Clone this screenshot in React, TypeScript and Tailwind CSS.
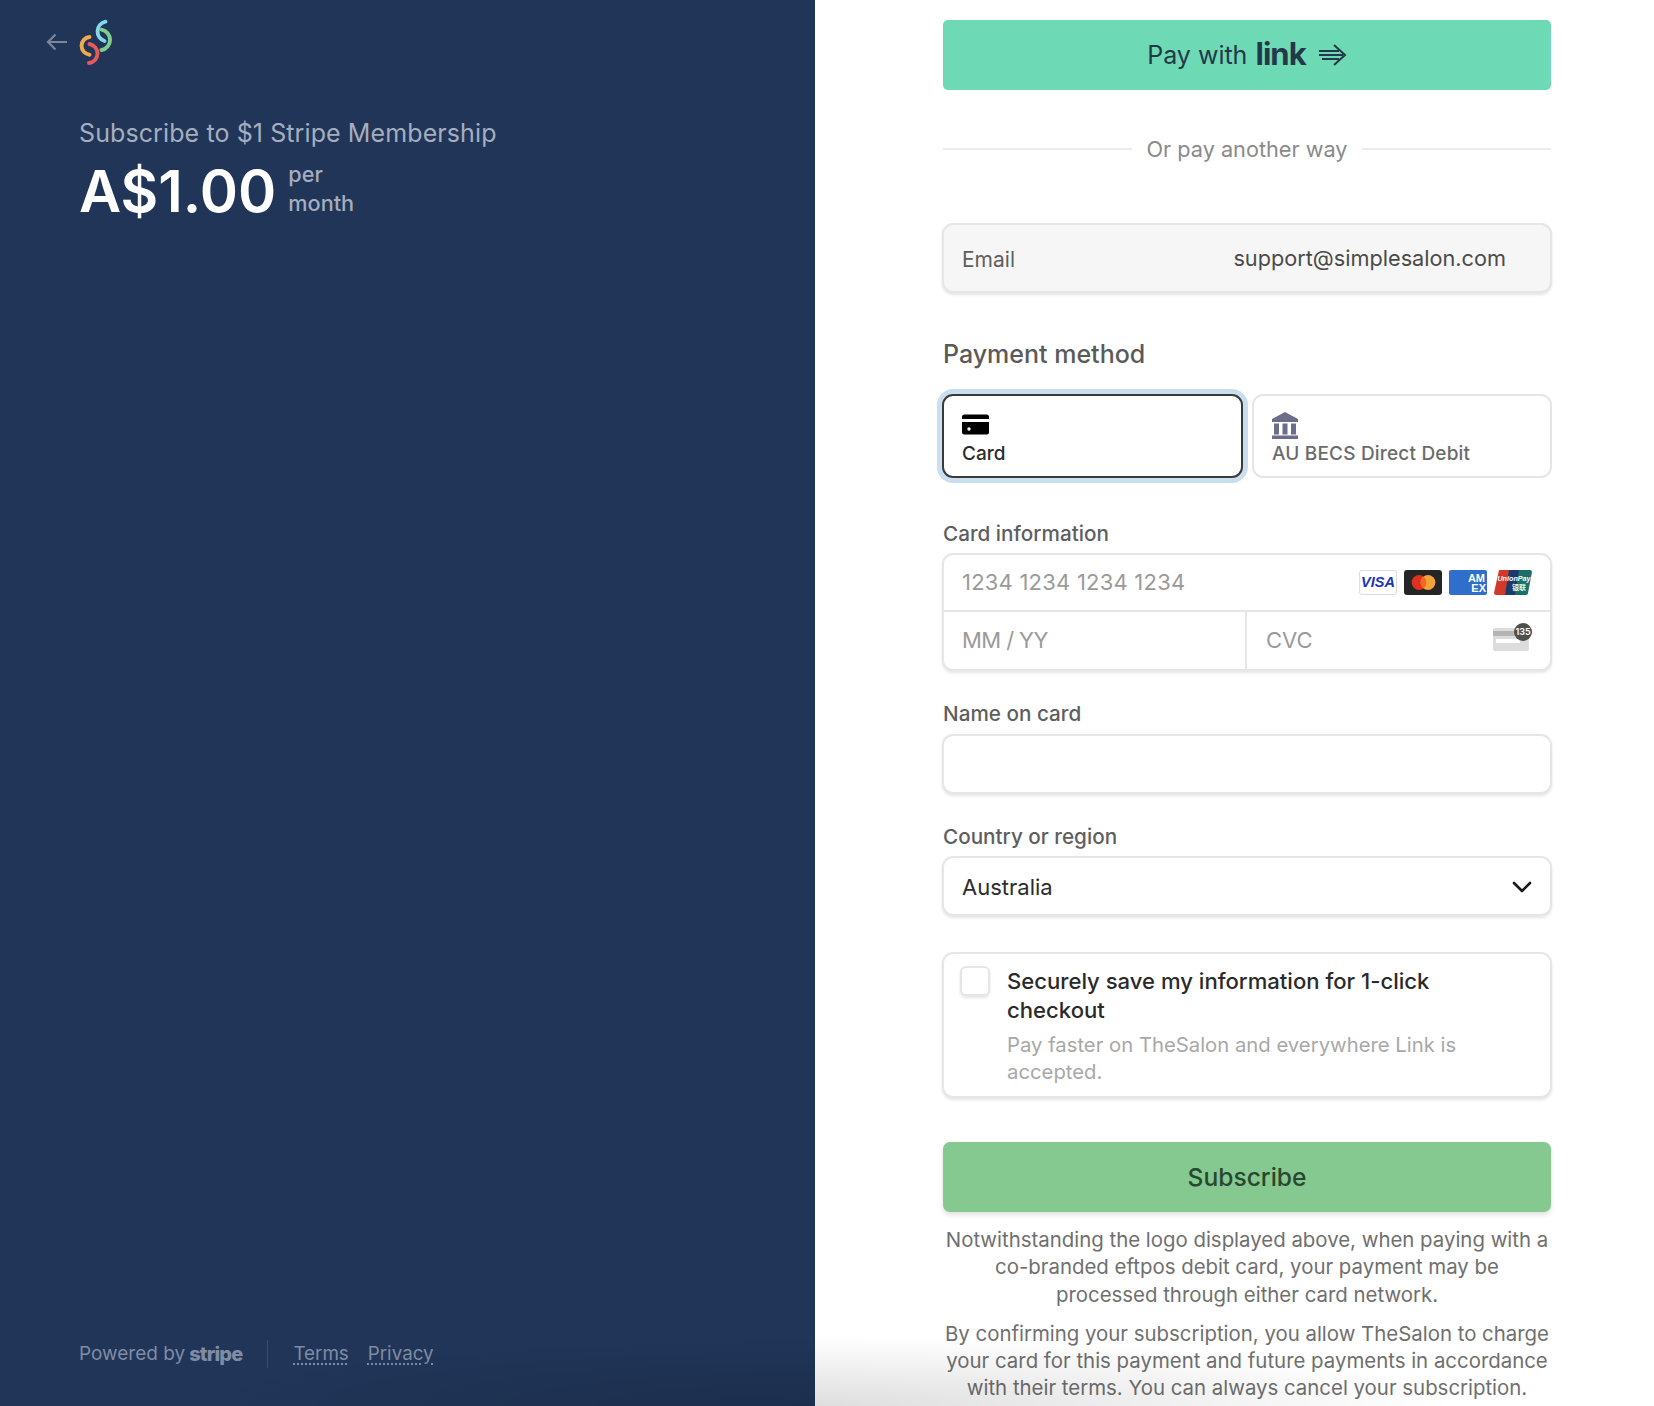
import React from "react";

const Label = ({ children, className = "" }: { children: React.ReactNode; className?: string }) => (
  <div className={`text-[20.7px] leading-[28px] text-[#5e5e5e] ${className}`}>{children}</div>
);

const Logo = () => (
  <svg width="36" height="46" viewBox="0 0 36 46" fill="none" strokeWidth="3.9" strokeLinecap="round">
    <path d="M26.5 2.7 A 10 10 0 0 0 25.5 22" stroke="#84d8e8" />
    <path d="M22.5 10.7 A 10.3 10.3 0 0 1 22.5 31" stroke="#80cd8e" />
    <path d="M10.5 18 A 8.9 8.9 0 0 0 10.5 35.7" stroke="#f2a94e" />
    <path d="M10.5 25 A 9.6 9.6 0 0 1 10 44" stroke="#e8595b" />
  </svg>
);

const LinkArrow = () => (
  <svg width="29" height="22" viewBox="0 0 29 22" fill="none" stroke="#24384a" strokeWidth="2">
    <path d="M1 7 H21 M1 11 H25 M4 15 H21" />
    <path d="M16 1 L27 11 L16 21" />
  </svg>
);

const CardIcon = () => (
  <svg width="27" height="21" viewBox="0 0 27 21">
    <path d="M0 3 a2.5 2.5 0 0 1 2.5 -2.5 h22 a2.5 2.5 0 0 1 2.5 2.5 v2 h-27z" fill="#000" />
    <path d="M0 8 h27 v10 a2.5 2.5 0 0 1 -2.5 2.5 h-22 a2.5 2.5 0 0 1 -2.5 -2.5z" fill="#000" />
    <circle cx="7" cy="15" r="1.7" fill="#fff" />
  </svg>
);

const BankIcon = () => (
  <svg width="26" height="27" viewBox="0 0 26 27" fill="#6c6d8a">
    <path d="M13 0 L26 7 V10 H0 V7z" />
    <rect x="2" y="11.5" width="5" height="11" />
    <rect x="10.5" y="11.5" width="5" height="11" />
    <rect x="19" y="11.5" width="5" height="11" />
    <rect x="0" y="23.5" width="26" height="3.5" />
  </svg>
);

const Visa = () => (
  <div className="w-[38px] h-[25px] rounded-[3px] border border-[#dcdcdc] bg-white flex items-center justify-center text-[14.5px] leading-none font-bold italic text-[#1a35b8] [font-family:'Liberation_Sans',sans-serif]">
    VISA
  </div>
);

const Mastercard = () => (
  <svg width="38" height="25" viewBox="0 0 38 25">
    <rect width="38" height="25" rx="3" fill="#252525" />
    <circle cx="15" cy="12.5" r="7.4" fill="#e0301e" />
    <circle cx="24" cy="12.5" r="7.4" fill="#f2a33a" />
    <path d="M19.5 6.6 a7.4 7.4 0 0 1 0 11.8 a7.4 7.4 0 0 1 0 -11.8z" fill="#f26a22" />
  </svg>
);

const Amex = () => (
  <svg width="38" height="25" viewBox="0 0 38 25">
    <rect width="38" height="25" rx="2" fill="#2f6fcb" />
    <text x="36" y="11.5" textAnchor="end" fontSize="11" fontWeight="700" fill="#fff" fontFamily="Liberation Sans, sans-serif">AM</text>
    <text x="37" y="21.5" textAnchor="end" fontSize="11" fontWeight="700" fill="#fff" fontFamily="Liberation Sans, sans-serif">EX</text>
  </svg>
);

const UnionPay = () => (
  <svg width="38" height="25" viewBox="0 0 38 25">
    <path d="M5 0 H17 L13 25 H2 A2 2 0 0 1 0 23z" fill="#d2392b" />
    <path d="M15 0 H27 L23 25 H11z" fill="#1c3a6e" />
    <path d="M25 0 H36 A2 2 0 0 1 38 2 L34 23 A2 2 0 0 1 32 25 H21z" fill="#1f6f68" />
    <text x="20" y="11" textAnchor="middle" fontSize="7.2" fontWeight="700" fontStyle="italic" fill="#fff" fontFamily="Liberation Sans, sans-serif">UnionPay</text>
    <text x="25" y="20" textAnchor="middle" fontSize="7" fontWeight="700" fill="#dfe" fontFamily="Noto Sans CJK SC, sans-serif">银联</text>
  </svg>
);

const CvcIcon = () => (
  <div className="relative w-[36px] h-[23px] -mt-[3px]">
    <svg width="36" height="23" viewBox="0 0 36 23" className="absolute left-0 top-0">
      <rect width="36" height="23" rx="2" fill="#dcdcdc" />
      <rect y="3" width="36" height="5" fill="#b4b4b4" />
      <rect x="3" y="11" width="24" height="4" fill="#fff" />
    </svg>
    <div className="absolute -right-[3px] -top-[5px] w-[18px] h-[18px] rounded-full bg-[#4f4f4f] text-white text-[9px] leading-[18px] text-center font-semibold">135</div>
  </div>
);

const fieldShadow = "shadow-[0_2px_3px_rgba(0,0,0,0.10)]";

export default function App() {
  return (
    <div className="relative flex h-[1406px] w-full overflow-hidden bg-white [font-family:Inter,'Noto_Sans',sans-serif]">
      <div className="w-[815px] shrink-0 bg-[#203558] flex flex-col justify-between pb-[38px]">
        <div>
          <div className="flex items-center pl-[46px] pt-[19px] h-[65px]">
            <svg width="22" height="18" viewBox="0 0 22 18" fill="none" stroke="#7a8699" strokeWidth="2.2" className="mr-[11px]">
              <path d="M21 9 H2 M9.5 1.5 L2 9 L9.5 16.5" />
            </svg>
            <Logo />
          </div>
          <div className="pl-[79px] pt-[51px]">
            <div className="text-[25px] leading-[34px] text-[#a5aebe] font-normal tracking-[0.1px]">Subscribe to $1 Stripe Membership</div>
            <div className="flex items-center mt-[7px]">
              <div className="text-[58px] leading-[68px] font-semibold text-white">A$1.00</div>
              <div className="ml-[12px] -mt-[5px] text-[21.7px] leading-[28.5px] text-[#a5aebe] font-medium">per<br />month</div>
            </div>
          </div>
        </div>
        <div className="pl-[79px] flex items-center text-[19px] text-[#7f8ca3]">
          <span>Powered by</span>
          <span className="ml-[4px] font-extrabold text-[20px] tracking-[-0.04em] leading-none">stripe</span>
          <div className="w-px h-[28px] bg-[#3a4d6d] mx-[25px]" />
          <span className="text-[18.8px] underline decoration-dotted decoration-2 underline-offset-[4px]">Terms</span>
          <span className="text-[18.8px] ml-[19px] underline decoration-dotted decoration-2 underline-offset-[4px]">Privacy</span>
        </div>
      </div>

      <div className="flex-1 pl-[128px] pt-[20px]">
        <div className="w-[608px]">
          <div className="h-[70px] rounded-[5px] bg-[#6ddab5] flex items-center justify-center text-[#24384a]">
            <span className="text-[25px] mt-[1px]">Pay with</span>
            <span className="ml-[8px] text-[31px] font-bold leading-none tracking-[-0.03em] -mt-[4px]">link</span>
            <span className="ml-[12px]"><LinkArrow /></span>
          </div>

          <div className="flex items-center mt-[43px] h-[32px]">
            <div className="flex-1 h-[2px] bg-[#ececec]" />
            <div className="px-[14px] text-[21.7px] text-[#8a8a8a]">Or pay another way</div>
            <div className="flex-1 h-[2px] bg-[#ececec]" />
          </div>

          <div className={`mt-[58px] h-[70px] -mx-px rounded-[11px] border-2 border-[#e6e6e6] bg-[#f6f6f6] flex items-center justify-between pl-[18px] pr-[19px] ${fieldShadow}`}>
            <span className="text-[21px] text-[#5e5e5e] mt-[3px]">Email</span>
            <span className="text-[21.7px] text-[#4a4a4a] mr-[25px]">support@simplesalon.com</span>
          </div>

          <div className="mt-[44px] text-[25px] leading-[34px] text-[#5a5a5a] font-medium">Payment method</div>

          <div className="flex gap-[9px] mt-[23px] -mx-px">
            <div className="w-[301px] h-[84px] rounded-[11px] border-2 border-[#3a3a3a] bg-white shadow-[0_0_0_5px_#c9deef] pl-[18px] pt-[18px]">
              <CardIcon />
              <div className="text-[19px] leading-[26px] text-[#2c2c2c] mt-[6px] font-[450]">Card</div>
            </div>
            <div className="flex-1 h-[84px] rounded-[11px] border-2 border-[#e6e6e6] bg-white pl-[18px] pt-[16px]">
              <BankIcon />
              <div className="text-[19px] leading-[26px] text-[#6b6b6b] mt-[2px] font-[450] tracking-[0.01em]">AU BECS Direct Debit</div>
            </div>
          </div>

          <Label className="mt-[42px] font-[450]">Card information</Label>
          <div className={`mt-[5px] -mx-px h-[118px] rounded-[11px] border-2 border-[#e6e6e6] bg-white ${fieldShadow}`}>
            <div className="h-[57px] flex items-center justify-between pl-[18px] pr-[18px] border-b-2 border-[#e6e6e6]">
              <span className="text-[22px] text-[#9a9a9a] tracking-[0.01em]">1234 1234 1234 1234</span>
              <div className="flex gap-[7px]">
                <Visa />
                <Mastercard />
                <Amex />
                <UnionPay />
              </div>
            </div>
            <div className="flex h-[57px]">
              <div className="w-[303px] flex items-center pl-[18px] border-r-2 border-[#e6e6e6] text-[22px] tracking-[-0.6px] text-[#9a9a9a]">MM / YY</div>
              <div className="flex-1 flex items-center justify-between pl-[19px] pr-[21px] text-[22px] text-[#9a9a9a]">
                <span>CVC</span>
                <CvcIcon />
              </div>
            </div>
          </div>

          <Label className="mt-[29px] font-[450]">Name on card</Label>
          <div className={`mt-[6px] -mx-px h-[60px] rounded-[11px] border-2 border-[#e6e6e6] bg-white ${fieldShadow}`} />

          <Label className="mt-[29px] font-[450]">Country or region</Label>
          <div className={`mt-[5px] -mx-px h-[60px] rounded-[11px] border-2 border-[#e6e6e6] bg-white flex items-center justify-between pl-[18px] pr-[18px] ${fieldShadow}`}>
            <span className="text-[22px] text-[#2c2c2c] mt-[2px]">Australia</span>
            <svg width="20" height="12" viewBox="0 0 20 12" fill="none" stroke="#1a1a1a" strokeWidth="2.6" strokeLinecap="round" strokeLinejoin="round" className="mt-[1px]">
              <path d="M2 2 L10 10 L18 2" />
            </svg>
          </div>

          <div className={`mt-[36px] -mx-px h-[146px] rounded-[11px] border-2 border-[#e6e6e6] bg-white flex pl-[16px] pt-[12px] ${fieldShadow}`}>
            <div className="w-[30px] h-[30px] rounded-[6px] border-2 border-[#e6e6e6] bg-white shrink-0 shadow-[0_2px_3px_rgba(0,0,0,0.10)]" />
            <div className="ml-[17px] pr-[60px] pt-[1px]">
              <div className="text-[22.1px] leading-[29px] text-[#2a2a2a] font-[450]">Securely save my information for 1-click checkout</div>
              <div className="mt-[7px] text-[20.3px] leading-[26.5px] text-[#a8a8a8]">Pay faster on TheSalon and everywhere Link is accepted.</div>
            </div>
          </div>

          <div className="mt-[44px] h-[70px] rounded-[7px] bg-[#85c991] flex items-center justify-center text-[24.6px] font-[450] text-[#28482f] shadow-[0_3px_5px_rgba(0,0,0,0.12)]">
            Subscribe
          </div>

          <div className="mt-[14px] text-[20.4px] leading-[27.3px] text-center text-[#6f6f6f]">
            Notwithstanding the logo displayed above, when paying with a co-branded eftpos debit card, your payment may be processed through either card network.
          </div>
          <div className="mt-[12px] text-[20.4px] leading-[27.3px] text-center text-[#6f6f6f]">
            By confirming your subscription, you allow TheSalon to charge your card for this payment and future payments in accordance with their terms. You can always cancel your subscription.
          </div>
        </div>
      </div>

      <div className="absolute left-0 right-0 bottom-0 h-[70px] pointer-events-none bg-[radial-gradient(ellipse_640px_70px_at_815px_100%,rgba(0,0,0,0.13),rgba(0,0,0,0)_100%)]" />
    </div>
  );
}
